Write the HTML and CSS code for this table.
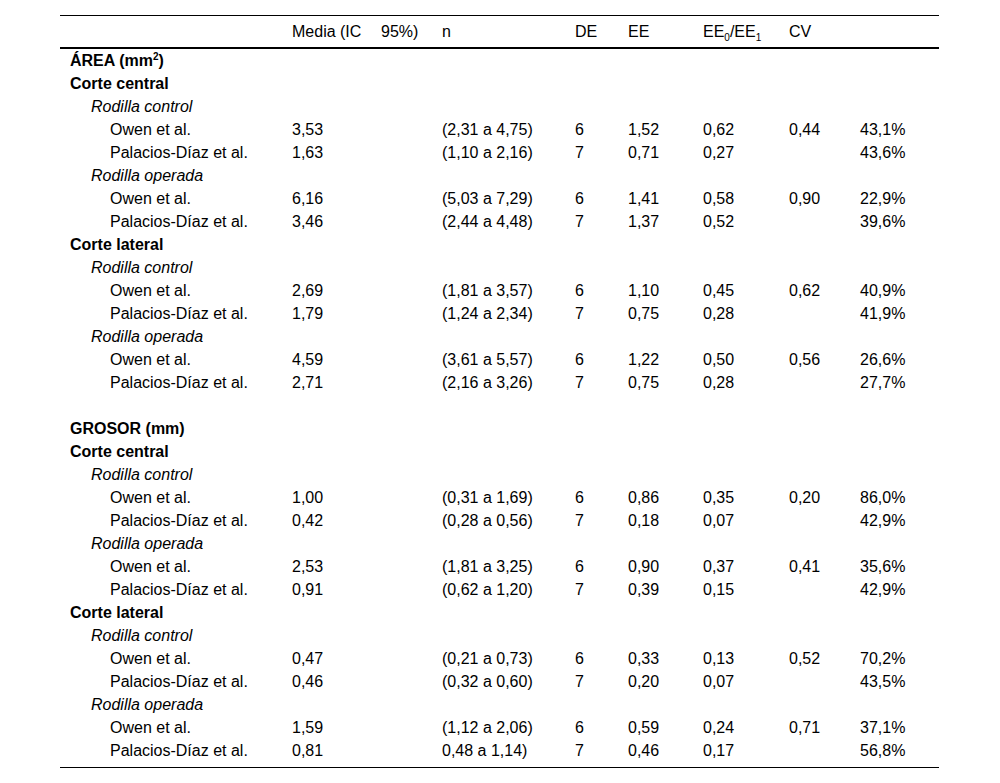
FILE: index.html
```html
<!DOCTYPE html>
<html lang="es">
<head>
<meta charset="utf-8">
<title>Tabla</title>
<link rel="stylesheet" href="styles.css">
</head>
<body>
<div class="wrap">
<table class="data">
<colgroup>
<col class="c1"><col class="c2"><col class="c3"><col class="c4"><col class="c5"><col class="c6"><col class="c7"><col class="c8"><col class="c9">
</colgroup>
<thead>
<tr><th></th><th>Media (IC</th><th>95%)</th><th>n</th><th>DE</th><th>EE</th><th>EE<sub>0</sub>/EE<sub>1</sub></th><th>CV</th><th></th></tr>
</thead>
<tbody>
<tr><td class="grp" colspan="9">ÁREA (mm<sup>2</sup>)</td></tr>
<tr><td class="grp" colspan="9">Corte central</td></tr>
<tr><td class="sub" colspan="9">Rodilla control</td></tr>
<tr><td class="st">Owen et al.</td><td>3,53</td><td></td><td>(2,31 a 4,75)</td><td>6</td><td>1,52</td><td>0,62</td><td>0,44</td><td>43,1%</td></tr>
<tr><td class="st">Palacios-Díaz et al.</td><td>1,63</td><td></td><td>(1,10 a 2,16)</td><td>7</td><td>0,71</td><td>0,27</td><td></td><td>43,6%</td></tr>
<tr><td class="sub" colspan="9">Rodilla operada</td></tr>
<tr><td class="st">Owen et al.</td><td>6,16</td><td></td><td>(5,03 a 7,29)</td><td>6</td><td>1,41</td><td>0,58</td><td>0,90</td><td>22,9%</td></tr>
<tr><td class="st">Palacios-Díaz et al.</td><td>3,46</td><td></td><td>(2,44 a 4,48)</td><td>7</td><td>1,37</td><td>0,52</td><td></td><td>39,6%</td></tr>
<tr><td class="grp" colspan="9">Corte lateral</td></tr>
<tr><td class="sub" colspan="9">Rodilla control</td></tr>
<tr><td class="st">Owen et al.</td><td>2,69</td><td></td><td>(1,81 a 3,57)</td><td>6</td><td>1,10</td><td>0,45</td><td>0,62</td><td>40,9%</td></tr>
<tr><td class="st">Palacios-Díaz et al.</td><td>1,79</td><td></td><td>(1,24 a 2,34)</td><td>7</td><td>0,75</td><td>0,28</td><td></td><td>41,9%</td></tr>
<tr><td class="sub" colspan="9">Rodilla operada</td></tr>
<tr><td class="st">Owen et al.</td><td>4,59</td><td></td><td>(3,61 a 5,57)</td><td>6</td><td>1,22</td><td>0,50</td><td>0,56</td><td>26,6%</td></tr>
<tr><td class="st">Palacios-Díaz et al.</td><td>2,71</td><td></td><td>(2,16 a 3,26)</td><td>7</td><td>0,75</td><td>0,28</td><td></td><td>27,7%</td></tr>
<tr><td colspan="9">&nbsp;</td></tr>
<tr><td class="grp" colspan="9">GROSOR (mm)</td></tr>
<tr><td class="grp" colspan="9">Corte central</td></tr>
<tr><td class="sub" colspan="9">Rodilla control</td></tr>
<tr><td class="st">Owen et al.</td><td>1,00</td><td></td><td>(0,31 a 1,69)</td><td>6</td><td>0,86</td><td>0,35</td><td>0,20</td><td>86,0%</td></tr>
<tr><td class="st">Palacios-Díaz et al.</td><td>0,42</td><td></td><td>(0,28 a 0,56)</td><td>7</td><td>0,18</td><td>0,07</td><td></td><td>42,9%</td></tr>
<tr><td class="sub" colspan="9">Rodilla operada</td></tr>
<tr><td class="st">Owen et al.</td><td>2,53</td><td></td><td>(1,81 a 3,25)</td><td>6</td><td>0,90</td><td>0,37</td><td>0,41</td><td>35,6%</td></tr>
<tr><td class="st">Palacios-Díaz et al.</td><td>0,91</td><td></td><td>(0,62 a 1,20)</td><td>7</td><td>0,39</td><td>0,15</td><td></td><td>42,9%</td></tr>
<tr><td class="grp" colspan="9">Corte lateral</td></tr>
<tr><td class="sub" colspan="9">Rodilla control</td></tr>
<tr><td class="st">Owen et al.</td><td>0,47</td><td></td><td>(0,21 a 0,73)</td><td>6</td><td>0,33</td><td>0,13</td><td>0,52</td><td>70,2%</td></tr>
<tr><td class="st">Palacios-Díaz et al.</td><td>0,46</td><td></td><td>(0,32 a 0,60)</td><td>7</td><td>0,20</td><td>0,07</td><td></td><td>43,5%</td></tr>
<tr><td class="sub" colspan="9">Rodilla operada</td></tr>
<tr><td class="st">Owen et al.</td><td>1,59</td><td></td><td>(1,12 a 2,06)</td><td>6</td><td>0,59</td><td>0,24</td><td>0,71</td><td>37,1%</td></tr>
<tr class="last"><td class="st">Palacios-Díaz et al.</td><td>0,81</td><td></td><td>0,48 a 1,14)</td><td>7</td><td>0,46</td><td>0,17</td><td></td><td>56,8%</td></tr>
</tbody>
</table>
</div>
</body>
</html>
```
FILE: styles.css
```css
html, body {
  margin: 0;
  padding: 0;
  background: #fff;
}
body {
  font-family: "Liberation Sans", Arial, sans-serif;
  font-size: 16px;
  color: #000;
}
.wrap {
  padding: 15px 0 0 60px;
}
.data {
  width: 879px;
  table-layout: fixed;
  border-collapse: separate;
  border-spacing: 0;
}
.c1 { width: 222px; }
.c2 { width: 89px; }
.c3 { width: 61px; }
.c4 { width: 133px; }
.c5 { width: 53px; }
.c6 { width: 75px; }
.c7 { width: 86px; }
.c8 { width: 71px; }
.c9 { width: 89px; }
.data th {
  font-weight: normal;
  text-align: left;
  height: 31px;
  padding: 0 0 0 10px;
  border-top: 1px solid #000;
  border-bottom: 2px solid #000;
  vertical-align: middle;
  white-space: nowrap;
  line-height: 23px;
}
.data th sub {
  font-size: 10px;
  line-height: 0;
  vertical-align: -4px;
}
.data td {
  padding: 0 0 0 10px;
  height: 23px;
  line-height: 23px;
  white-space: nowrap;
  vertical-align: top;
}
.data td.grp {
  font-weight: bold;
}
.data td.grp sup {
  font-size: 10px;
  line-height: 0;
  vertical-align: 6px;
}
.data td.sub {
  font-style: italic;
  padding-left: 31px;
}
.data td.st {
  padding-left: 50px;
}
.data tr.last td {
  padding-bottom: 5px;
  border-bottom: 1px solid #000;
}
```
